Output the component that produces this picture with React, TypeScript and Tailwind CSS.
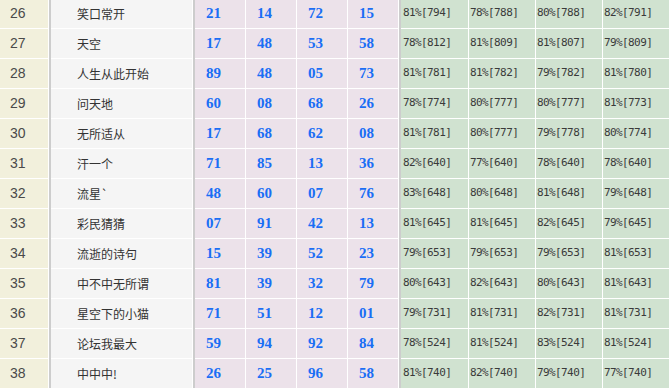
import React from 'react';

type Row = { id: number; name: string; nums: string[]; rates: string[] };

const rows: Row[] = [
  { id: 26, name: '笑口常开', nums: ['21', '14', '72', '15'], rates: ['81%[794]', '78%[788]', '80%[788]', '82%[791]'] },
  { id: 27, name: '天空', nums: ['17', '48', '53', '58'], rates: ['78%[812]', '81%[809]', '81%[807]', '79%[809]'] },
  { id: 28, name: '人生从此开始', nums: ['89', '48', '05', '73'], rates: ['81%[781]', '81%[782]', '79%[782]', '81%[780]'] },
  { id: 29, name: '问天地', nums: ['60', '08', '68', '26'], rates: ['78%[774]', '80%[777]', '80%[777]', '81%[773]'] },
  { id: 30, name: '无所适从', nums: ['17', '68', '62', '08'], rates: ['81%[781]', '80%[777]', '79%[778]', '80%[774]'] },
  { id: 31, name: '汗一个', nums: ['71', '85', '13', '36'], rates: ['82%[640]', '77%[640]', '78%[640]', '78%[640]'] },
  { id: 32, name: '流星`', nums: ['48', '60', '07', '76'], rates: ['83%[648]', '80%[648]', '81%[648]', '79%[648]'] },
  { id: 33, name: '彩民猜猜', nums: ['07', '91', '42', '13'], rates: ['81%[645]', '81%[645]', '82%[645]', '79%[645]'] },
  { id: 34, name: '流逝的诗句', nums: ['15', '39', '52', '23'], rates: ['79%[653]', '79%[653]', '79%[653]', '81%[653]'] },
  { id: 35, name: '中不中无所谓', nums: ['81', '39', '32', '79'], rates: ['80%[643]', '82%[643]', '80%[643]', '81%[643]'] },
  { id: 36, name: '星空下的小猫', nums: ['71', '51', '12', '01'], rates: ['79%[731]', '81%[731]', '82%[731]', '81%[731]'] },
  { id: 37, name: '论坛我最大', nums: ['59', '94', '92', '84'], rates: ['78%[524]', '81%[524]', '83%[524]', '81%[524]'] },
  { id: 38, name: '中中中!', nums: ['26', '25', '96', '58'], rates: ['81%[740]', '82%[740]', '79%[740]', '77%[740]'] },
];

// vertical gray rule between column groups
function Sep() {
  return (
    <div className="w-[3px] flex justify-center">
      <div className="w-[2px] bg-[#cdcdcd]" />
    </div>
  );
}

export default function App() {
  return (
    <div className="w-[672px] h-[388px] overflow-hidden bg-white">
      <div className="flex -mt-px">
        {/* Rank */}
        <div className="flex flex-col gap-px">
          {rows.map((r) => (
            <div
              key={r.id}
              className="w-[48px] h-[29px] bg-[#f2f0dc] flex items-center pl-[10px] text-[14px] text-[#4a4a4a] font-['Liberation_Sans',sans-serif]"
            >
              {r.id}
            </div>
          ))}
        </div>
        <Sep />

        {/* Name */}
        <div className="flex flex-col gap-px">
          {rows.map((r) => (
            <div
              key={r.id}
              className="w-[141px] h-[29px] bg-[#f5f5f5] flex items-center pl-[26px] text-[12px] text-[#333] font-['Noto_Sans_CJK_SC',sans-serif]"
            >
              {r.name}
            </div>
          ))}
        </div>
        <Sep />

        {/* Numbers */}
        <div className="flex flex-col gap-px">
          {rows.map((r) => (
            <div key={r.id} className="flex gap-px">
              {r.nums.map((n, i) => (
                <div
                  key={i}
                  className="w-[50px] h-[29px] bg-[#ece2ea] flex items-center pl-[11px] text-[15px] font-bold text-[#1a6ef5] font-['Liberation_Serif',serif]"
                >
                  {n}
                </div>
              ))}
            </div>
          ))}
        </div>
        <Sep />

        {/* Rates */}
        <div className="flex flex-col gap-px">
          {rows.map((r) => (
            <div key={r.id} className="flex gap-px">
              {r.rates.map((t, i) => (
                <div
                  key={i}
                  className={`${i === 0 ? 'w-[67px] pl-[2px]' : 'w-[66px] pl-px'} h-[29px] bg-[#d0e2d0] flex items-center text-[11px] tracking-[-0.6px] text-[#3a3a3a] font-['DejaVu_Sans_Mono',monospace]`}
                >
                  {t}
                </div>
              ))}
            </div>
          ))}
        </div>
      </div>
    </div>
  );
}
